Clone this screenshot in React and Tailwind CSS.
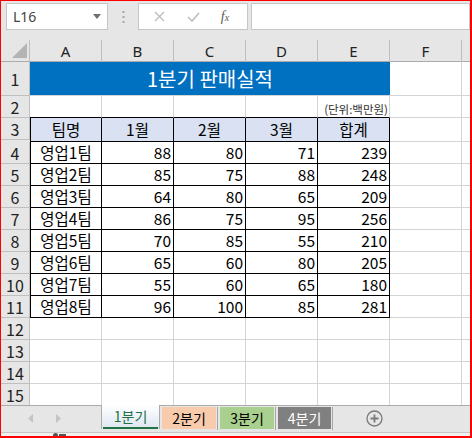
import React from "react";

const data = [
  ["영업1팀", 88, 80, 71, 239],
  ["영업2팀", 85, 75, 88, 248],
  ["영업3팀", 64, 80, 65, 209],
  ["영업4팀", 86, 75, 95, 256],
  ["영업5팀", 70, 85, 55, 210],
  ["영업6팀", 65, 60, 80, 205],
  ["영업7팀", 55, 60, 65, 180],
  ["영업8팀", 96, 100, 85, 281],
];

const grid = "grid grid-cols-[29px_repeat(6,72px)_1fr]";
const gc = "bg-white border-r border-b border-[#d4d4d4]";

function RowHead({ n, h = "h-[22px]", noBottom }) {
  return (
    <div
      className={
        "bg-[#e6e6e6] border-r border-[#bfbfbf] flex items-center justify-center text-[16px] text-[#222] " +
        h +
        (noBottom ? "" : " border-b")
      }
    >
      {n}
    </div>
  );
}

export default function App() {
  return (
    <div className="w-[472px] h-[438px] border-l border-t border-r-2 border-b-2 border-[#ff0000] bg-[#e6e6e6] flex flex-col overflow-hidden font-['Noto_Sans_CJK_KR',sans-serif] text-black">
      {/* formula bar */}
      <div className="h-[39px] shrink-0 flex items-start pt-[2px]">
        <div className="ml-[5px] w-[102px] h-[27px] bg-white border border-[#c6c6c6] flex items-center justify-between pl-[6px] pr-[6px]">
          <span className="text-[14px] text-[#444] font-['Noto_Sans',sans-serif] leading-none">L16</span>
          <svg width="8" height="5" viewBox="0 0 8 5">
            <path d="M0 0 L8 0 L4 5 Z" fill="#707070" />
          </svg>
        </div>
        <div className="w-[30px] h-[27px] flex items-center justify-center">
          <svg width="3" height="12" viewBox="0 0 3 12">
            <rect x="0.5" y="0" width="2" height="2" fill="#a6a6a6" />
            <rect x="0.5" y="5" width="2" height="2" fill="#a6a6a6" />
            <rect x="0.5" y="10" width="2" height="2" fill="#a6a6a6" />
          </svg>
        </div>
        <div className="w-[110px] h-[27px] bg-white border border-[#c6c6c6] flex items-center">
          <div className="w-[38px] flex justify-center pl-[2px]">
            <svg width="11" height="11" viewBox="0 0 11 11">
              <path d="M1 1 L10 10 M10 1 L1 10" stroke="#bdbdbd" strokeWidth="1.4" />
            </svg>
          </div>
          <div className="w-[32px] flex justify-center">
            <svg width="13" height="10" viewBox="0 0 13 10">
              <path d="M1 5 L5 9 L12 1" stroke="#bdbdbd" strokeWidth="1.6" fill="none" />
            </svg>
          </div>
          <div className="w-[32px] flex justify-center">
            <span className="font-['Liberation_Serif',serif] italic text-[14px] text-[#5a5a5a] leading-none">
              f<span className="text-[10px]">x</span>
            </span>
          </div>
        </div>
        <div className="ml-[3px] flex-1 h-[27px] bg-white border border-[#c6c6c6]" />
      </div>

      {/* column headers */}
      <div className={grid + " h-[22px] shrink-0 border-b border-[#ababab] font-['Noto_Sans',sans-serif]"}>
        <div className="border-r border-[#bfbfbf] relative">
          <svg className="absolute left-[11px] top-[3px]" width="15" height="15" viewBox="0 0 15 15">
            <path d="M15 0 L15 15 L0 15 Z" fill="#b4b4b4" />
          </svg>
        </div>
        {["A", "B", "C", "D", "E", "F"].map((c) => (
          <div
            key={c}
            className="border-r border-[#bfbfbf] flex items-center justify-center text-[15px] text-[#222]"
          >
            {c}
          </div>
        ))}
        <div />
      </div>

      {/* sheet body */}
      <div className={grid + " shrink-0"}>
        {/* row 1 */}
        <RowHead n="1" h="h-[34px]" />
        <div className="col-span-5 bg-[#0070c0] border-b border-[#d4d4d4] flex items-center justify-center text-white text-[20px]">
          1분기 판매실적
        </div>
        <div className={gc} />
        <div className="bg-white border-b border-[#d4d4d4]" />

        {/* row 2 */}
        <RowHead n="2" />
        <div className="bg-white border-r border-[#d4d4d4] border-b border-b-black" />
        <div className="bg-white border-r border-[#d4d4d4] border-b border-b-black" />
        <div className="bg-white border-r border-[#d4d4d4] border-b border-b-black" />
        <div className="bg-white border-r border-[#d4d4d4] border-b border-b-black" />
        <div className="bg-white border-r border-[#d4d4d4] border-b border-b-black flex items-end justify-end pr-[1px] pb-[2px] text-[11.5px] leading-none text-[#333]">
          (단위:백만원)
        </div>
        <div className={gc} />
        <div className="bg-white border-b border-[#d4d4d4]" />

        {/* row 3 */}
        <RowHead n="3" />
        {["팀명", "1월", "2월", "3월", "합계"].map((t, i) => (
          <div
            key={t}
            className={
              "bg-[#d9e1f2] border-r border-b border-black flex items-center justify-center text-[15.5px]" +
              (i === 0 ? " border-l" : "")
            }
          >
            {t}
          </div>
        ))}
        <div className={gc} />
        <div className="bg-white border-b border-[#d4d4d4]" />

        {/* data rows */}
        {data.map((r, ri) => (
          <React.Fragment key={ri}>
            <RowHead n={String(ri + 4)} />
            {r.map((v, i) => (
              <div
                key={i}
                className={
                  "h-[22px] bg-white border-r border-b border-black flex items-center text-[15.5px] " +
                  (i === 0 ? "border-l justify-center" : "justify-end pr-[2px]")
                }
              >
                {v}
              </div>
            ))}
            <div className={gc} />
            <div className="bg-white border-b border-[#d4d4d4]" />
          </React.Fragment>
        ))}

        {/* empty rows */}
        {[12, 13, 14, 15].map((n) => (
          <React.Fragment key={n}>
            <RowHead n={String(n)} h={n === 15 ? "h-[21px]" : "h-[22px]"} noBottom={n === 15} />
            {[0, 1, 2, 3, 4, 5].map((i) => (
              <div
                key={i}
                className={"bg-white border-r border-[#d4d4d4]" + (n === 15 ? "" : " border-b")}
              />
            ))}
            <div className={"bg-white border-[#d4d4d4]" + (n === 15 ? "" : " border-b")} />
          </React.Fragment>
        ))}
      </div>

      {/* sheet tabs */}
      <div className="h-[27px] shrink-0 border-t border-[#ababab] bg-[#e6e6e6] flex items-start text-[14px]">
        <div className="w-[100px] h-[24px] flex items-center">
          <svg className="ml-[27px]" width="5" height="9" viewBox="0 0 5 9">
            <path d="M5 0 L5 9 L0 4.5 Z" fill="#c4c4c4" />
          </svg>
          <svg className="ml-[23px]" width="5" height="9" viewBox="0 0 5 9">
            <path d="M0 0 L0 9 L5 4.5 Z" fill="#c4c4c4" />
          </svg>
        </div>
        <div className="-mt-px h-[24px] w-[59px] border-l border-r border-[#ababab] bg-gradient-to-b from-white to-[#dde5f0] flex flex-col">
          <div className="flex-1 flex items-center justify-center text-[#217346]">1분기</div>
          <div className="h-[2px] bg-[#217346] mx-[1px]" />
        </div>
        <div className="ml-[2px] mt-[1px] w-[54px] h-[22px] bg-[#f8cbad] flex items-center justify-center">2분기</div>
        <div className="ml-[1px] mt-[1px] w-px h-[23px] bg-[#a6a6a6]" />
        <div className="ml-[2px] mt-[1px] w-[54px] h-[22px] bg-[#a9d08e] flex items-center justify-center">3분기</div>
        <div className="ml-[1px] mt-[1px] w-px h-[23px] bg-[#a6a6a6]" />
        <div className="ml-[2px] mt-[1px] w-[53px] h-[22px] bg-[#808080] text-white flex items-center justify-center">4분기</div>
        <div className="ml-[1px] mt-[1px] w-px h-[23px] bg-[#a6a6a6]" />
        <div className="ml-[33px] mt-[4px]">
          <svg width="17" height="17" viewBox="0 0 17 17">
            <circle cx="8.5" cy="8.5" r="7.5" fill="none" stroke="#7a7a7a" strokeWidth="1.3" />
            <path d="M8.5 4.5 V12.5 M4.5 8.5 H12.5" stroke="#7a7a7a" strokeWidth="1.8" />
          </svg>
        </div>
      </div>

      {/* bottom strip */}
      <div className="flex-1 border-t border-[#c6c6c6] bg-[#f0f0f0] relative">
        <div className="absolute left-[52px] bottom-0 w-[5px] h-[3px] rounded-t-full bg-[#555]" />
        <div className="absolute left-[58px] bottom-0 w-[7px] h-[2px] bg-[#555]" />
      </div>
    </div>
  );
}
